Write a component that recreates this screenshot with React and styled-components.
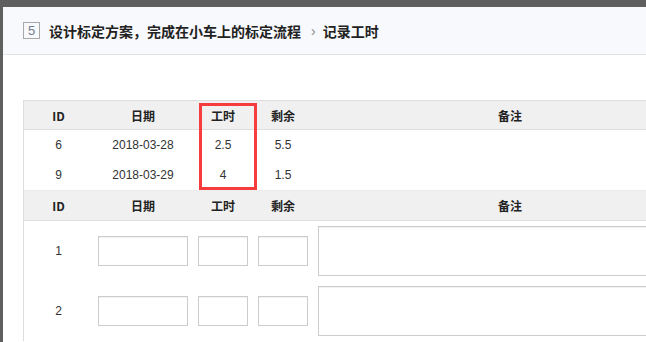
import React from "react";
import styled, { createGlobalStyle } from "styled-components";

const Global = createGlobalStyle`
  html, body { margin: 0; padding: 0; background: #5f5f60; overflow: hidden; }
  body { font-family: "Liberation Sans", "Noto Sans CJK SC", sans-serif; color: #333; }
`;

const Page = styled.div`
  width: 646px;
  height: 342px;
  padding: 7px 0 0 3px;
  box-sizing: border-box;
  overflow: hidden;
`;

const Modal = styled.div`
  width: 780px;
  height: 400px;
  background: #fff;
`;

const Header = styled.div`
  height: 48px;
  box-sizing: border-box;
  background: #f8f9fc;
  border-bottom: 1px solid #e3e3e3;
  display: flex;
  align-items: center;
  padding-left: 20px;
`;

const StepBox = styled.span`
  width: 15px;
  height: 15px;
  border: 1px solid #a8a8a8;
  display: flex;
  align-items: center;
  justify-content: center;
  font-size: 13px;
  color: #6e7c8c;
  margin-right: 9px;
`;

const Title = styled.span`
  font-family: "Noto Sans CJK SC", sans-serif;
  font-size: 14px;
  font-weight: bold;
  color: #222;
`;

const Sep = styled.span`
  font-family: "Liberation Sans", sans-serif;
  font-size: 14px;
  color: #888;
  margin: 0 7px 0 10px;
`;

const Body = styled.div`
  padding: 45px 0 0 20px;
`;

const Table = styled.div`
  position: relative;
  display: grid;
  grid-template-columns: 69px 100px 60px 60px 394px;
  border-left: 1px solid #ddd;
  width: 684px;
`;

const HeadCell = styled.div`
  height: ${(p) => (p.$top ? 28 : 29)}px;
  background: #f0f0f0;
  border-top: 1px solid ${(p) => (p.$top ? "#dedede" : "#ececec")};
  border-bottom: 1px solid #dedede;
  display: flex;
  align-items: center;
  justify-content: center;
  font-family: "Noto Sans CJK SC", sans-serif;
  font-weight: bold;
  font-size: 12px;
  color: #222;
`;

const Cell = styled.div`
  height: ${(p) => p.$h}px;
  display: flex;
  align-items: center;
  justify-content: center;
  font-size: 12px;
  color: #333;
  padding: 0 5px;
`;

const Input = styled.div`
  width: 100%;
  height: 30px;
  box-sizing: border-box;
  border: 1px solid #ccc;
  box-shadow: inset 0 1px 1px rgba(0, 0, 0, 0.06);
  background: #fff;
`;

const Textarea = styled(Input)`
  height: 50px;
`;

const Highlight = styled.div`
  position: absolute;
  left: 175px;
  top: 3px;
  width: 58px;
  height: 87px;
  box-sizing: border-box;
  border: 3px solid #f63c3c;
  pointer-events: none;
`;

const heads = ["ID", "日期", "工时", "剩余", "备注"];
const records = [
  ["6", "2018-03-28", "2.5", "5.5", ""],
  ["9", "2018-03-29", "4", "1.5", ""],
];

export default function App() {
  return (
    <>
      <Global />
      <Page>
        <Modal>
          <Header>
            <StepBox>5</StepBox>
            <Title>设计标定方案，完成在小车上的标定流程</Title>
            <Sep>›</Sep>
            <Title>记录工时</Title>
          </Header>
          <Body>
            <Table>
              {heads.map((h) => (
                <HeadCell key={h} $top>
                  {h}
                </HeadCell>
              ))}
              {records.map((r) =>
                r.map((v, i) => (
                  <Cell key={r[0] + i} $h={30}>
                    {v}
                  </Cell>
                ))
              )}
              <Highlight />
            </Table>
            <Table>
              {heads.map((h) => (
                <HeadCell key={h}>{h}</HeadCell>
              ))}
              {["1", "2"].map((id) => (
                <React.Fragment key={id}>
                  <Cell $h={60}>{id}</Cell>
                  <Cell $h={60}>
                    <Input />
                  </Cell>
                  <Cell $h={60}>
                    <Input />
                  </Cell>
                  <Cell $h={60}>
                    <Input />
                  </Cell>
                  <Cell $h={60}>
                    <Textarea />
                  </Cell>
                </React.Fragment>
              ))}
            </Table>
          </Body>
        </Modal>
      </Page>
    </>
  );
}
